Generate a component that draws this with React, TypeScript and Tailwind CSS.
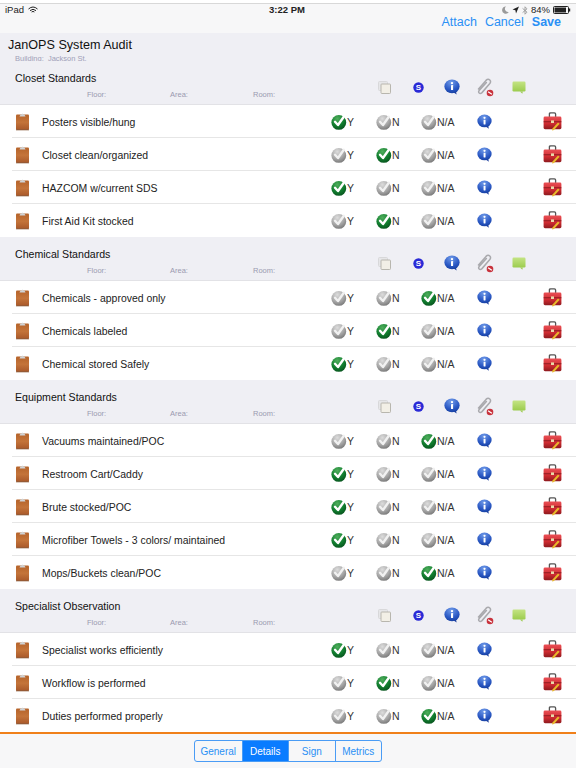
const sections = [
  {
    title: 'Closet Standards',
    rows: [
      { label: 'Posters visible/hung', answer: 'Y' },
      { label: 'Closet clean/organized', answer: 'N' },
      { label: 'HAZCOM w/current SDS', answer: 'Y' },
      { label: 'First Aid Kit stocked', answer: 'N' },
    ],
  },
  {
    title: 'Chemical Standards',
    rows: [
      { label: 'Chemicals - approved only', answer: 'N/A' },
      { label: 'Chemicals labeled', answer: 'N' },
      { label: 'Chemical stored Safely', answer: 'Y' },
    ],
  },
  {
    title: 'Equipment Standards',
    rows: [
      { label: 'Vacuums maintained/POC', answer: 'N/A' },
      { label: 'Restroom Cart/Caddy', answer: 'Y' },
      { label: 'Brute stocked/POC', answer: 'Y' },
      { label: 'Microfiber Towels - 3 colors/ maintained', answer: 'Y' },
      { label: 'Mops/Buckets clean/POC', answer: 'N/A' },
    ],
  },
  {
    title: 'Specialist Observation',
    rows: [
      { label: 'Specialist works efficiently', answer: 'Y' },
      { label: 'Workflow is performed', answer: 'N' },
      { label: 'Duties performed properly', answer: 'N/A' },
    ],
  },
];

function CheckIcon({ on }: { on: boolean }) {
  const id = on ? 'check-on' : 'check-off';
  return (
    <svg width="16" height="16" viewBox="0 0 16 16" className="shrink-0">
      <defs>
        <radialGradient id={id} cx="0.4" cy="0.25" r="0.85">
          <stop offset="0" stopColor={on ? '#4fae5c' : '#dcdcdc'} />
          <stop offset="0.55" stopColor={on ? '#117e2f' : '#a8a8a8'} />
          <stop offset="1" stopColor={on ? '#064a1a' : '#6e6e6e'} />
        </radialGradient>
      </defs>
      <circle cx="7.8" cy="8.4" r="7.4" fill={`url(#${id})`} />
      <path
        d="M4 7.8 L7 11 L12.8 2.8"
        fill="none"
        stroke={on ? '#ffffff' : '#f1f1f1'}
        strokeWidth="2.4"
        strokeLinecap="round"
        strokeLinejoin="round"
      />
    </svg>
  );
}

function Clipboard() {
  return (
    <svg width="15" height="18" viewBox="0 0 15 18">
      <defs>
        <linearGradient id="board" x1="0" y1="0" x2="0" y2="1">
          <stop offset="0" stopColor="#b5632a" />
          <stop offset="0.5" stopColor="#c4743a" />
          <stop offset="1" stopColor="#a8582a" />
        </linearGradient>
      </defs>
      <rect x="1" y="1.5" width="13" height="15.5" rx="1" fill="url(#board)" />
      <rect x="1" y="16" width="13" height="1.5" fill="#8a5a3a" opacity="0.6" />
      <path d="M4.5 3.4 L5.5 1.6 H6.5 L7.5 0.4 L8.5 1.6 H9.5 L10.5 3.4 Z" fill="#cfd2d4" />
    </svg>
  );
}

function InfoBubble({ size }: { size: number }) {
  return (
    <svg width={size} height={size} viewBox="0 0 16 16">
      <defs>
        <radialGradient id="info" cx="0.45" cy="0.2" r="0.9">
          <stop offset="0" stopColor="#6f9ae8" />
          <stop offset="0.6" stopColor="#2a58c4" />
          <stop offset="1" stopColor="#123a98" />
        </radialGradient>
      </defs>
      <path d="M9 13 L12.6 15.6 L12 12 Z" fill="#1d3f9c" />
      <ellipse cx="8" cy="7.4" rx="7.6" ry="6.8" fill="url(#info)" />
      <circle cx="8" cy="4.1" r="1.2" fill="#ffffff" />
      <rect x="7" y="6.1" width="2.1" height="5" rx="0.4" fill="#ffffff" />
    </svg>
  );
}

function Toolbox() {
  return (
    <svg width="19" height="20" viewBox="0 0 19 20">
      <defs>
        <linearGradient id="box" x1="0" y1="0" x2="0" y2="1">
          <stop offset="0" stopColor="#ea5055" />
          <stop offset="0.55" stopColor="#cf2b31" />
          <stop offset="1" stopColor="#8e1a1e" />
        </linearGradient>
      </defs>
      <path d="M6.4 5 V1.9 Q6.4 0.8 7.6 0.8 H11.4 Q12.6 0.8 12.6 1.9 V5" fill="none" stroke="#555" strokeWidth="1.3" />
      <rect x="0.6" y="4.6" width="17.8" height="12.6" rx="1.4" fill="url(#box)" />
      <rect x="0.6" y="9.4" width="17.8" height="0.8" fill="#7e1519" />
      <rect x="8" y="8.4" width="3" height="2.6" fill="#e9d9a8" />
      <path d="M9.5 16.4 L15 10.4 L16.6 11.8 L11 18 L9 18.4 Z" fill="#e8b92c" />
    </svg>
  );
}

function CopyIcon() {
  return (
    <svg width="13" height="13" viewBox="0 0 13 13">
      <rect x="0.5" y="0.5" width="9" height="9" rx="1" fill="#e6e6e8" stroke="#d8d8da" />
      <rect x="3" y="3" width="9.5" height="9.5" rx="0.8" fill="#f2efe6" stroke="#b8b6ae" />
    </svg>
  );
}

function SkypeDot() {
  return (
    <svg width="11" height="11" viewBox="0 0 11 11">
      <circle cx="5.5" cy="5.5" r="5.2" fill="#2a2ad6" />
      <text x="5.5" y="8.3" textAnchor="middle" fontSize="8" fontWeight="700" fill="#ffffff" fontFamily="Liberation Sans, sans-serif">
        S
      </text>
    </svg>
  );
}

function PaperclipOff() {
  return (
    <svg width="18" height="19" viewBox="0 0 18 19">
      <path
        d="M2.5 11 L10 2.4 Q12 0.4 13.8 2 Q15.4 3.6 13.6 5.8 L6 14.6 Q4.4 16 3.2 15 Q2 13.8 3.4 12.2 L10.4 4.6"
        fill="none"
        stroke="#a9a9ad"
        strokeWidth="1.5"
        strokeLinecap="round"
      />
      <circle cx="14" cy="15" r="3.3" fill="#c8323c" />
      <rect x="11.7" y="14.4" width="4.6" height="1.2" fill="#ffffff" transform="rotate(35 14 15)" />
    </svg>
  );
}

function GreenNote() {
  return (
    <svg width="14" height="13" viewBox="0 0 14 13">
      <defs>
        <linearGradient id="note" x1="0" y1="0" x2="0" y2="1">
          <stop offset="0" stopColor="#c4e484" />
          <stop offset="1" stopColor="#9ccc4e" />
        </linearGradient>
      </defs>
      <rect x="0.5" y="0.5" width="13" height="10" rx="1.2" fill="url(#note)" />
      <path d="M8 10.5 L10.4 12.8 L10.8 10.5 Z" fill="#9ccc4e" />
    </svg>
  );
}

function Answer({ text, on }: { text: string; on: boolean }) {
  return (
    <div className="flex items-center w-[45px]">
      <CheckIcon on={on} />
      <span className="text-[10.5px] leading-[16px] text-[#333]">{text}</span>
    </div>
  );
}

function Section({ title, rows }: { title: string; rows: { label: string; answer: string }[] }) {
  return (
    <div>
      <div className="flex h-[44px] bg-[#efeff4] border-b border-[#e2e2e6]">
        <div className="w-[368px]">
          <div className="pl-[15px] pt-[10px] text-[10.6px] leading-[14px] text-[#111]">{title}</div>
          <div className="flex pl-[87px] pt-[3px] text-[7.5px] leading-[14px] text-[#9a9ab0]">
            <span className="w-[83px]">Floor:</span>
            <span className="w-[83px]">Area:</span>
            <span>Room:</span>
          </div>
        </div>
        <div className="flex items-center h-[18px] mt-[17px]">
          <div className="flex justify-center w-[33.5px]"><CopyIcon /></div>
          <div className="flex justify-center w-[33.5px]"><SkypeDot /></div>
          <div className="flex justify-center w-[33.5px]"><InfoBubble size={16} /></div>
          <div className="flex justify-center w-[33.5px]"><PaperclipOff /></div>
          <div className="flex justify-center w-[33.5px]"><GreenNote /></div>
        </div>
      </div>
      {rows.map((row, i) => (
        <div key={row.label} className="pl-[12px]">
          <div className={`flex items-center h-[33px] pt-[2px] border-b ${i < rows.length - 1 ? 'border-[#e6e6e6]' : 'border-transparent'}`}>
            <div className="w-[30px] pl-[3px] flex"><Clipboard /></div>
            <div className="w-[289px] pt-[2px] text-[10.45px] leading-[16px] text-[#222]">{row.label}</div>
            <Answer text="Y" on={row.answer === 'Y'} />
            <Answer text="N" on={row.answer === 'N'} />
            <Answer text="N/A" on={row.answer === 'N/A'} />
            <div className="ml-[11px] w-[15px] h-[16px] flex justify-center"><InfoBubble size={15} /></div>
            <div className="ml-[51px] flex"><Toolbox /></div>
          </div>
        </div>
      ))}
    </div>
  );
}

export default function App() {
  const tabs = ['General', 'Details', 'Sign', 'Metrics'];

  return (
    <div className="w-[576px] h-[768px] overflow-hidden flex flex-col bg-white font-['Liberation_Sans',sans-serif]">
      {/* Status + nav bar */}
      <div className="h-[33px] shrink-0 bg-white">
        <div className="h-[4px] border-b border-[#d8d8d8]" />
        <div className="h-[29px] bg-[#f7f7f8]">
          <div className="flex justify-between items-center h-[10px] pt-[2px] px-[5px] text-[9.5px] leading-[10px] text-[#222]">
            <div className="flex items-center gap-[4px]">
              <span>iPad</span>
              <svg width="10" height="8" viewBox="0 0 10 8">
                <path d="M0.5 3 Q5 -1 9.5 3 M2 4.6 Q5 2 8 4.6 M3.6 6 Q5 4.8 6.4 6" fill="none" stroke="#222" strokeWidth="1" />
              </svg>
            </div>
            <span className="-mr-[34px] font-bold">3:22 PM</span>
            <div className="flex items-center gap-[3px]">
              <svg width="7" height="8" viewBox="0 0 7 8">
                <path d="M4 0.5 A3.6 3.6 0 1 0 6.8 6 A3.2 3.2 0 0 1 4 0.5 Z" fill="#9a9a9a" />
              </svg>
              <svg width="7" height="8" viewBox="0 0 7 8">
                <path d="M7 0.5 L0.5 3.6 L3.4 4.2 L4 7.5 Z" fill="#222" />
              </svg>
              <svg width="6" height="9" viewBox="0 0 6 9">
                <path d="M0.6 2.4 L5 6.2 L3 8.2 V0.8 L5 2.8 L0.6 6.6" fill="none" stroke="#999" strokeWidth="0.9" />
              </svg>
              <span>84%</span>
              <svg width="18" height="8" viewBox="0 0 18 8">
                <rect x="0.5" y="0.5" width="15" height="7" rx="1" fill="none" stroke="#222" />
                <rect x="1.5" y="1.5" width="11.5" height="5" fill="#222" />
                <rect x="16" y="2.5" width="1.2" height="3" fill="#222" />
              </svg>
            </div>
          </div>
          <div className="flex justify-end gap-[8px] pr-[15px] pt-[1px] text-[12.5px] leading-[15px] text-[#2a90f5]">
            <span>Attach</span>
            <span>Cancel</span>
            <span className="font-bold">Save</span>
          </div>
        </div>
      </div>

      {/* Audit header */}
      <div className="h-[28px] shrink-0 bg-[#efeff4] pl-[8px] pt-[5px]">
        <div className="text-[12.6px] leading-[15px] text-[#111]">JanOPS System Audit</div>
        <div className="pl-[7px] pt-[1px] text-[7.5px] leading-[10px] text-[#a0a0b8]">Building:&nbsp; Jackson St.</div>
      </div>

      <div className="flex-1 overflow-hidden">
        {sections.map((section) => (
          <Section key={section.title} title={section.title} rows={section.rows} />
        ))}
      </div>

      {/* Bottom tabs */}
      <div className="h-[36px] shrink-0 bg-[#f7f7f8] border-t-[2px] border-[#f0801a] flex justify-center pt-[6px]">
        <div className="flex h-[22px] border border-[#4a9cf5] rounded-[3px] overflow-hidden text-[10px] text-[#2a90f5]">
          {tabs.map((tab, i) => (
            <div
              key={tab}
              className={`flex items-center justify-center w-[46.5px] ${i > 0 ? 'border-l border-[#4a9cf5]' : ''} ${tab === 'Details' ? 'bg-[#0a7cff] text-white' : ''}`}
            >
              {tab}
            </div>
          ))}
        </div>
      </div>
    </div>
  );
}
